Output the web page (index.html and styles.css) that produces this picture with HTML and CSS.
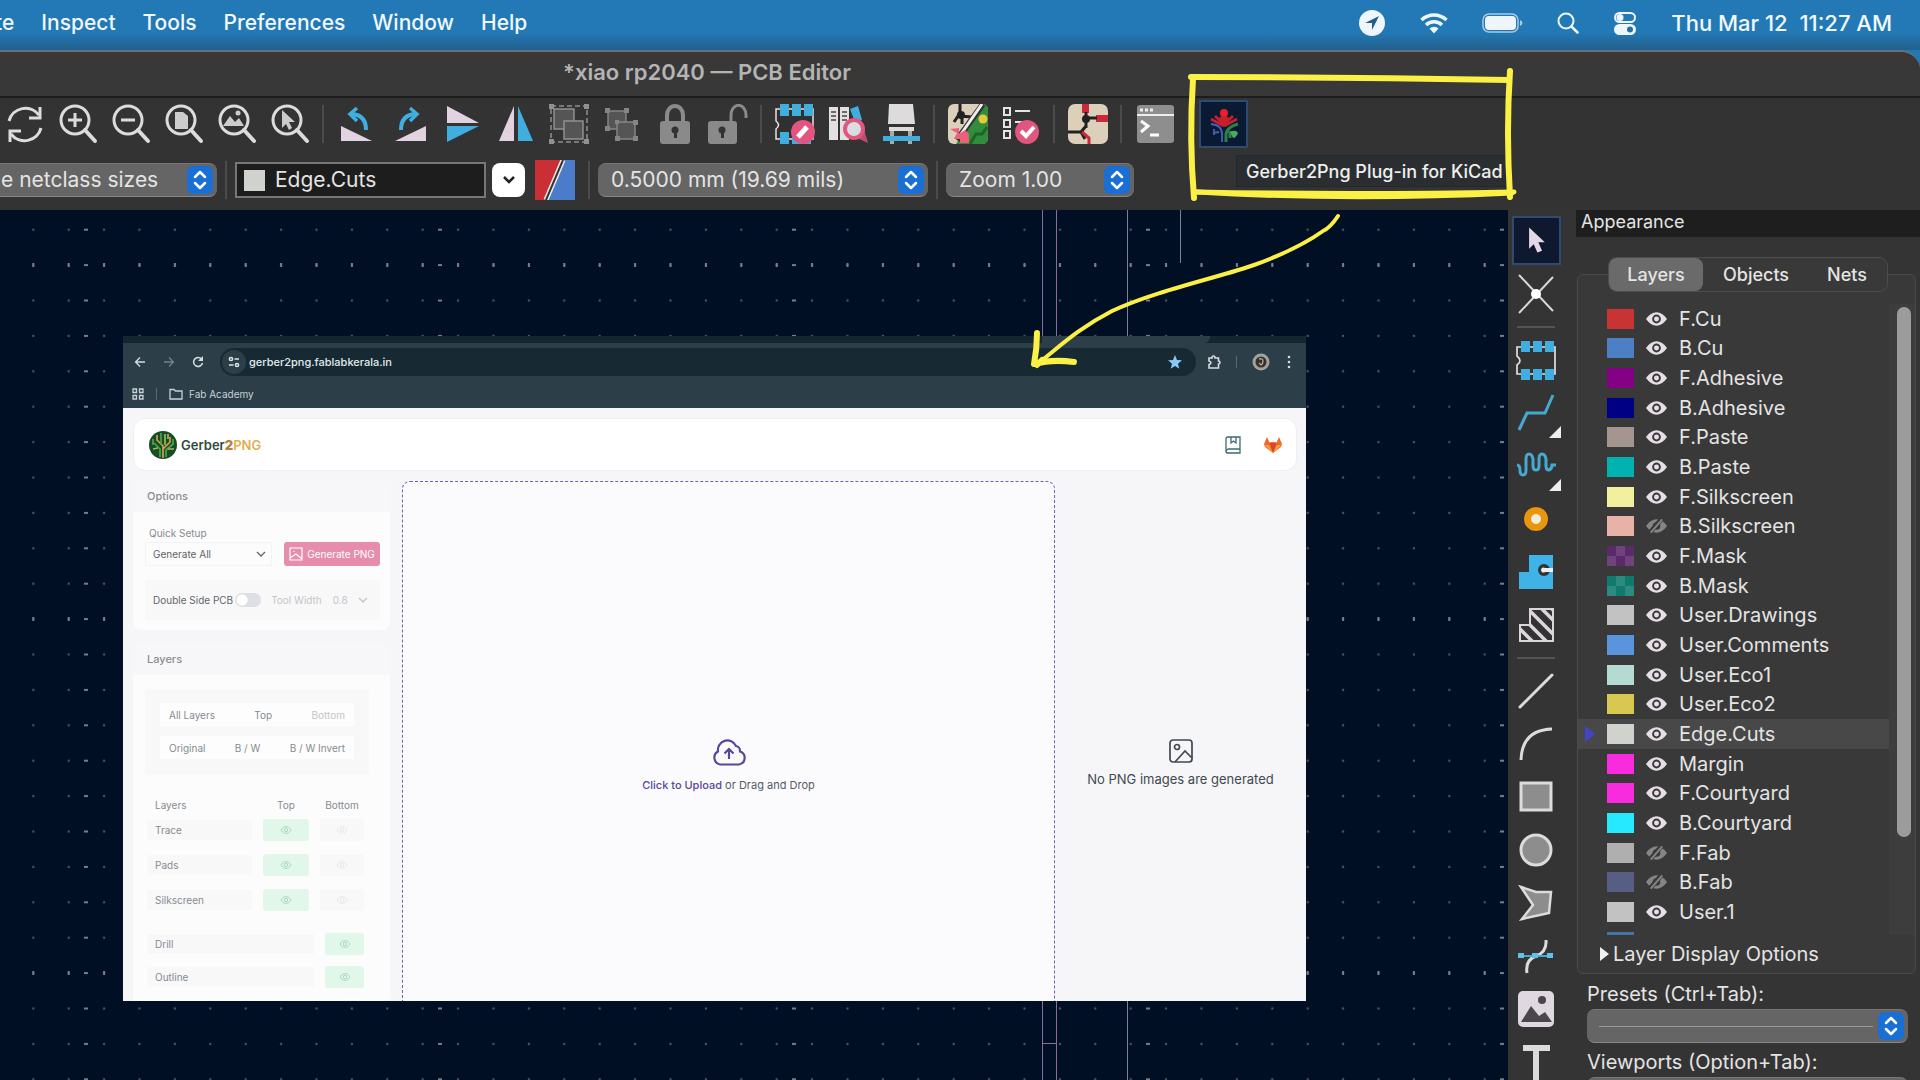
FILE: index.html
```html
<!DOCTYPE html>
<html lang="en">
<head>
<meta charset="utf-8">
<title>xiao rp2040 — PCB Editor</title>
<link rel="stylesheet" href="styles.css">
</head>
<body>
<svg class="defs" aria-hidden="true">
  <defs>
    <symbol id="eye" viewBox="0 0 22 16"><path d="M0 8Q5 1 11 1t11 7Q17 15 11 15T0 8Z" fill="#e6dfe6"/><circle cx="11" cy="8" r="4.6" fill="#3a383a"/><circle cx="11" cy="8" r="2.6" fill="#e6dfe6"/></symbol>
    <symbol id="eye-off" viewBox="0 0 22 16"><path d="M0 8Q5 1 11 1t11 7Q17 15 11 15T0 8Z" fill="#858585"/><circle cx="11" cy="8" r="4" fill="#3a3a3a"/><path d="M4 15 16 1" stroke="#3a3a3a" stroke-width="5"/><path d="M5 15 17 1" stroke="#858585" stroke-width="2"/></symbol>
    <symbol id="eye-line" viewBox="0 0 12 10"><path d="M1 5q2-3.500 5-3.500T11 5Q9 8.500 6 8.500T1 5Z" fill="none" stroke="currentColor"/><circle cx="6" cy="5" r="1.700" fill="none" stroke="currentColor"/></symbol>
    <symbol id="updown" viewBox="0 0 26 28"><rect width="26" height="28" rx="6" fill="#1a6fd4"/><path d="m8 11 5-5 5 5M8 17l5 5 5-5" fill="none" stroke="#fff" stroke-width="2.500" stroke-linecap="round" stroke-linejoin="round"/></symbol>
    <symbol id="lens" viewBox="0 0 40 40"><circle cx="17" cy="16" r="14" fill="none" stroke="#dcdcdc" stroke-width="3"/><path d="m27 26 10 11" stroke="#dcdcdc" stroke-width="4" stroke-linecap="round"/></symbol>
    <symbol id="chev" viewBox="0 0 10 6"><path d="m1 1 4 4 4-4" fill="none" stroke="currentColor" stroke-width="1.300"/></symbol>
  </defs>
</svg>

<header class="menubar">
  <nav class="menus">
    <button>te</button><button>Inspect</button><button>Tools</button><button>Preferences</button><button>Window</button><button>Help</button>
  </nav>
  <div class="status">
    <svg width="28" height="28" viewBox="0 0 28 28"><circle cx="14" cy="14" r="13" fill="#eef6fb"/><path d="M21 7 7 14h7v7Z" fill="#24618a"/></svg>
    <svg width="28" height="22" viewBox="0 0 28 22"><g fill="none" stroke="#eef6fb" stroke-width="3.500"><path d="M1.500 8a18 18 0 0 1 25 0M6 13a11.500 11.500 0 0 1 16 0"/></g><path d="m9.500 16.500 4.500 5 4.500-5a6.500 6.500 0 0 0-9 0Z" fill="#eef6fb"/></svg>
    <svg width="41" height="20" viewBox="0 0 41 20"><rect x="1" y="1" width="35" height="18" rx="6" fill="none" stroke="#a9cbe2" stroke-width="1.500"/><rect x="3" y="3" width="31" height="14" rx="4" fill="#eef6fb"/><path d="M38 7v6q2.500-1 2.500-3T38 7Z" fill="#a9cbe2"/></svg>
    <svg width="22" height="22" viewBox="0 0 22 22"><circle cx="9" cy="9" r="7.500" fill="none" stroke="#eef6fb" stroke-width="2"/><path d="m14.500 14.500 6 6" stroke="#eef6fb" stroke-width="2.500" stroke-linecap="round"/></svg>
    <svg width="24" height="24" viewBox="0 0 24 24"><rect x="2" y="2" width="20" height="9" rx="4.500" fill="none" stroke="#eef6fb" stroke-width="2"/><circle cx="7" cy="6.500" r="3.500" fill="#eef6fb"/><rect x="1" y="13" width="22" height="11" rx="5.500" fill="#eef6fb"/><circle cx="17" cy="18.500" r="3" fill="#2670a3"/></svg>
    <time>Thu Mar 12&nbsp; 11:27 AM</time>
  </div>
</header>

<div class="window">
<div class="titlebar"><h1>*xiao rp2040 — PCB Editor</h1></div>

<div class="toolbar">
  <div class="tools">
    <button aria-label="Refresh"><svg viewBox="0 0 40 40"><path d="M4 17A17 17 0 0 1 34 11M36 24A17 17 0 0 1 6 30" fill="none" stroke="#dcdcdc" stroke-width="3"/><path d="M35 3v11H24M5 38V27h11" fill="none" stroke="#dcdcdc" stroke-width="3"/></svg></button>
    <button aria-label="Zoom in"><svg viewBox="0 0 40 40"><use href="#lens"/><path d="M17 9v14M10 16h14" stroke="#dcdcdc" stroke-width="3"/></svg></button>
    <button aria-label="Zoom out"><svg viewBox="0 0 40 40"><use href="#lens"/><path d="M10 16h14" stroke="#dcdcdc" stroke-width="3"/></svg></button>
    <button aria-label="Zoom to page"><svg viewBox="0 0 40 40"><use href="#lens"/><path d="M11 8h8l5 4v13H11Z" fill="#ccc"/></svg></button>
    <button aria-label="Zoom to objects"><svg viewBox="0 0 40 40"><use href="#lens"/><path d="m6 22 7-10 5 6 4-4 5 8Z" fill="#ccc"/><circle cx="21" cy="9" r="2.500" fill="#ccc"/></svg></button>
    <button aria-label="Zoom to selection"><svg viewBox="0 0 40 40"><use href="#lens"/><path d="M12 6v18l4-4 3 6 3-2-3-6h6Z" fill="#ccc"/></svg></button>
    <i class="sep"></i>
    <button aria-label="Rotate left"><svg viewBox="0 0 40 40"><path d="M4 22v15h31Z" fill="#e2d3e0"/><path d="M15 10q14 1 14 16" fill="none" stroke="#41aee0" stroke-width="4"/><path d="m20 4-7 6 7 7" fill="none" stroke="#41aee0" stroke-width="3.500"/></svg></button>
    <button aria-label="Rotate right"><svg viewBox="0 0 40 40"><path d="M36 22v15H5Z" fill="#e2d3e0"/><path d="M25 10q-14 1-14 16" fill="none" stroke="#41aee0" stroke-width="4"/><path d="m20 4 7 6-7 7" fill="none" stroke="#41aee0" stroke-width="3.500"/></svg></button>
    <button aria-label="Mirror vertically"><svg viewBox="0 0 40 40"><path d="M4 2v17h32Z" fill="#e2d3e0"/><path d="M4 38V22h32Z" fill="#41aee0"/></svg></button>
    <button aria-label="Mirror horizontally"><svg viewBox="0 0 40 40"><path d="M3 37h15V2Z" fill="#e2d3e0"/><path d="M37 37H22V2Z" fill="#41aee0"/></svg></button>
    <button aria-label="Group"><svg viewBox="0 0 40 40"><rect x="2" y="2" width="36" height="36" fill="none" stroke="#909090" stroke-width="1.500" stroke-dasharray="5 3"/><g fill="#555" stroke="#909090" stroke-width="1.500"><path d="M5 5h20v20H5Z"/><path d="M15 17h19v18H15Z"/></g><path d="M0 0h5v5H0ZM35 0h5v5h-5ZM0 35h5v5H0ZM35 35h5v5h-5Z" fill="#909090"/></svg></button>
    <button aria-label="Ungroup"><svg viewBox="0 0 40 40"><g fill="#555" stroke="#858585" stroke-width="1.500"><path d="M6 7h18v18H6Z"/><path d="M15 18h18v17H15Z"/></g><path d="M3 4h5v5H3ZM22 4h5v5h-5ZM3 22h5v5H3ZM13 16h4v4h-4ZM31 16h5v5h-5ZM13 32h5v5h-5ZM31 32h5v5h-5Z" fill="#858585"/></svg></button>
    <button aria-label="Lock"><svg viewBox="0 0 40 40"><path d="M12 18v-7a8 9 0 0 1 16 0v7" fill="none" stroke="#8a8a8a" stroke-width="4"/><rect x="5" y="17" width="30" height="23" rx="3" fill="#8a8a8a"/><circle cx="20" cy="26" r="3.500" fill="#333"/><path d="M19 27h3v7h-3Z" fill="#333"/></svg></button>
    <button aria-label="Unlock"><svg viewBox="0 0 40 40"><path d="M23 18v-7a7 9 0 0 1 15 0v3" fill="none" stroke="#8a8a8a" stroke-width="3"/><rect x="0" y="17" width="29" height="23" rx="3" fill="#8a8a8a"/><circle cx="14" cy="26" r="3.500" fill="#333"/><path d="M13 27h3v7h-3Z" fill="#333"/></svg></button>
    <i class="sep"></i>
    <button aria-label="Footprint editor"><svg viewBox="0 0 40 40"><path d="M1 5h37v30H1V25q5-4 0-8Z" fill="#303030" stroke="#e8dfe8" stroke-width="1.500"/><path d="M5 0h9v12H5ZM17 0h9v12h-9ZM29 0h9v12h-9ZM5 28h9v12H5ZM17 32h19v8H17Z" fill="#41aee0"/><circle cx="28" cy="28" r="12" fill="#e2557f"/><path d="m23 33 9-10" stroke="#fff" stroke-width="5"/></svg></button>
    <button aria-label="Footprint library"><svg viewBox="0 0 40 40"><path d="M1 3h9v33H1ZM12 3h9v33h-9Z" fill="#e4dfe2"/><path d="M3 8h5M3 12h5M3 16h5M14 8h5M14 12h5M14 16h5" stroke="#444" stroke-width="1.500"/><path d="m22 5 8-3 4 14-7 2Z" fill="#41aee0"/><path d="m28 29 6-11 6 21-9-4Z" fill="#b84e72"/><circle cx="26" cy="25" r="9" fill="#d8dde0" stroke="#e2557f" stroke-width="4"/></svg></button>
    <button aria-label="3D viewer"><svg viewBox="0 0 40 40"><path d="m8 0h24l2 20H7ZM8 23h25v4H8Z" fill="#dedbdd"/><path d="M9 27h4v13H9ZM27 27h4v13h-4Z" fill="#aaa"/><path d="M2 32h37v5H2Z" fill="#41aee0"/></svg></button>
    <i class="sep"></i>
    <button aria-label="Update from schematic"><svg viewBox="0 0 40 40"><rect width="40" height="40" rx="6" fill="#dcd0bb"/><path d="m33 0H34q6 0 6 6v28q0 6-6 6H8Z" fill="#318c3b"/><path d="m22 40 6-10h6l5-7" fill="none" stroke="#1d6527" stroke-width="3"/><path d="M12 0v9l-6 9m6-6 12 1M14 10v10" stroke="#222" stroke-width="3" fill="none"/><circle cx="13" cy="11" r="4" fill="#222"/><path d="M35 0 9 36" stroke="#333" stroke-width="6"/><path d="M34 0 11 33" stroke="#eee" stroke-width="3"/><circle cx="35" cy="15" r="4.500" fill="#e5c83b"/><path d="m2 25 9-1v6l6-4 4 4v9h-9v-4H6l3-6Z" fill="#ed5f7b"/></svg></button>
    <button aria-label="Rules checker"><svg viewBox="0 0 40 40"><path d="M3 4h6v7H3ZM3 16h6v7H3ZM3 27h6v7H3ZM14 7h15M14 18h8" fill="none" stroke="#e4e4e4" stroke-width="2"/><circle cx="26" cy="28" r="12" fill="#e2557f"/><path d="m20 27 5 5 8-9" fill="none" stroke="#fff" stroke-width="4"/></svg></button>
    <i class="sep"></i>
    <button aria-label="Schematic editor"><svg viewBox="0 0 40 40"><rect width="40" height="40" rx="7" fill="#dcd0bb"/><path d="M14 0h7v9h-7ZM28 11h12v7H28Z" fill="#c92a3c"/><path d="M18 8v16M19 14h10M0 28h16M18 22l-5 6 4 7" fill="none" stroke="#222" stroke-width="3"/><circle cx="18" cy="15" r="4" fill="#222"/><path d="m14 28 7 6v6" fill="none" stroke="#c92a3c" stroke-width="3"/></svg></button>
    <i class="sep"></i>
    <button aria-label="Scripting console"><svg viewBox="0 0 40 40"><rect x="2" y="1" width="37" height="38" rx="3" fill="#8e8e8e"/><path d="M2 11h37" stroke="#eee" stroke-width="2"/><path d="M5 6h3M10 6h3M15 6h3" stroke="#eee" stroke-width="3"/><path d="m6 17 7 5-7 6M15 31h9" fill="none" stroke="#fff" stroke-width="3"/></svg></button>
    <button class="plugin" aria-label="Gerber2Png Plug-in"><svg viewBox="0 0 40 40"><g fill="none" stroke-width="3"><path d="M20 22 7 15m13 7 13-7M20 20V9M11 12l9 8 9-8" stroke="#c81f2c"/><path d="M7 20q11 1 11 10v8M9 29l6-1M10 25v6" stroke="#4660b4" stroke-width="1.800"/><path d="M34 20q-11 3-12 10v8M26 34v-7" stroke="#2c8144"/></g><path d="m15 14 5-4 5 4-2 7h-6Z" fill="#c81f2c"/><circle cx="20" cy="9" r="4" fill="#e8202c"/><path d="M26 28q6-3 8 1-2 5-5 5Z" fill="#4aa765"/></svg></button>
  </div>
  <div class="fields">
    <label class="combo combo-net"><select aria-label="Track width"><option>e netclass sizes</option></select><svg><use href="#updown"/></svg></label>
    <i class="sep"></i>
    <div class="layer-box"><i></i><input aria-label="Active layer" value="Edge.Cuts" readonly></div>
    <button class="drop" aria-label="Choose layer"><svg width="16" height="10" viewBox="0 0 16 10"><path d="m3 2 5 5 5-5" fill="none" stroke="#222" stroke-width="2.500"/></svg></button>
    <button class="pair" aria-label="Layer pair"><svg width="40" height="40" viewBox="0 0 40 40"><path d="M0 0h40v40H0Z" fill="#4a7cc9"/><path d="M0 0h27L10 40H0Z" fill="#c92f35"/><path d="M28 0 11 40" stroke="#eee" stroke-width="5"/><path d="M28 0 11 40" stroke="#333" stroke-width="2"/></svg></button>
    <i class="sep"></i>
    <label class="combo combo-grid"><select aria-label="Grid"><option>0.5000 mm (19.69 mils)</option></select><svg><use href="#updown"/></svg></label>
    <i class="sep"></i>
    <label class="combo combo-zoom"><select aria-label="Zoom"><option>Zoom 1.00</option></select><svg><use href="#updown"/></svg></label>
  </div>
</div>

<main class="workspace">
  <section class="canvas">
    <svg class="grid-dots" aria-hidden="true">
      <defs>
        <pattern id="dots" x="15.600" y="2" width="35.400" height="35.400" patternUnits="userSpaceOnUse"><circle cx="17.700" cy="17.700" r="1.200" fill="#4a5561"/></pattern>
        <pattern id="cols" x="-91" y="2" width="354" height="35.400" patternUnits="userSpaceOnUse"><rect x="175" y="16.700" width="4" height="2" fill="#76808b"/></pattern>
        <pattern id="rows" x="15.600" y="-122" width="35.400" height="354" patternUnits="userSpaceOnUse"><rect x="16.700" y="175" width="2" height="4" fill="#76808b"/></pattern>
      </defs>
      <rect width="100%" height="100%" fill="url(#dots)"/><rect width="100%" height="100%" fill="url(#cols)"/><rect width="100%" height="100%" fill="url(#rows)"/>
      <g fill="none" stroke="#8a6c9e"><path d="M1042.500 0v900M1056.500 0v900M1042.500 833.500h14"/><path d="M1127.500 0v900M1180.500 0v53" stroke="#7f7f9a"/></g>
    </svg>

    <article class="browser">
      <div class="tabstrip"><i></i></div>
      <div class="navbar">
        <button aria-label="Back"><svg width="12" height="12" viewBox="0 0 12 12"><path d="M11 6H2m4-4.500L1.500 6 6 10.500" fill="none" stroke="#d5dde1" stroke-width="1.300"/></svg></button>
        <button aria-label="Forward"><svg width="12" height="12" viewBox="0 0 12 12"><path d="M1 6h9M6 1.500 10.500 6 6 10.500" fill="none" stroke="#72828b" stroke-width="1.300"/></svg></button>
        <button aria-label="Reload"><svg width="12" height="12" viewBox="0 0 12 12"><path d="M10.500 7A4.500 4.500 0 1 1 9.500 3" fill="none" stroke="#d5dde1" stroke-width="1.500"/><path d="M11 0v5H6Z" fill="#d5dde1"/></svg></button>
        <div class="omnibox">
          <span class="site"><svg width="12" height="12" viewBox="0 0 12 12"><g fill="none" stroke="#dfe6e9" stroke-width="1.500"><circle cx="3" cy="3" r="1.600"/><path d="M6.500 3H11M1 9h4.500"/><circle cx="9" cy="9" r="1.600"/></g></svg></span>
          <input aria-label="Address" value="gerber2png.fablabkerala.in">
          <svg width="14" height="14" viewBox="0 0 14 14"><path d="m7 0 2 5 5 .3-4 3.400 1.300 5L7 11l-4.300 2.700 1.300-5L0 5.300 5 5Z" fill="#8cc8f5"/></svg>
        </div>
        <svg width="14" height="14" viewBox="0 0 14 14"><path d="M2 3h3q0-2 1.500-2T8 3h3.500v3Q13 6 13 7.500T11.500 9v4H2V9.500Q4 9 4 7.700T2 6Z" fill="none" stroke="#d5dde1" stroke-width="1.600"/></svg>
        <i class="nav-sep"></i>
        <svg width="18" height="18" viewBox="0 0 18 18"><circle cx="9" cy="9" r="8.500" fill="#a3a29d"/><circle cx="9" cy="9" r="5.500" fill="#35312d"/><path d="M7 6q4-1 4 2t-2 4l-2-2" fill="none" stroke="#b5aa98" stroke-width="1.300"/></svg>
        <svg width="4" height="14" viewBox="0 0 4 14"><g fill="#d5dde1"><circle cx="2" cy="2" r="1.300"/><circle cx="2" cy="7" r="1.300"/><circle cx="2" cy="12" r="1.300"/></g></svg>
      </div>
      <div class="bookmarks">
        <svg width="12" height="12" viewBox="0 0 12 12"><path d="M1 1h3.500v3.500H1ZM7.500 1H11v3.500H7.500ZM1 7.500h3.500V11H1ZM7.500 7.500H11V11H7.500Z" fill="none" stroke="#c8d2d7" stroke-width="1.300"/></svg>
        <i class="nav-sep"></i>
        <svg width="14" height="12" viewBox="0 0 14 12"><path d="M1 10V1.500h4L6.500 3H13v8H1Z" fill="none" stroke="#c8d2d7" stroke-width="1.300"/></svg>
        <a href="#">Fab Academy</a>
      </div>

      <div class="page">
        <header class="site-head">
          <svg width="28" height="28" viewBox="0 0 28 28"><circle cx="14" cy="14" r="14" fill="#174c28"/><g fill="none" stroke-width="1.700"><path d="M14 27V15L8 9V4M14 18l7-7V6" stroke="#d3a04e"/><path d="M11 26v-8l-6-6M17 26v-7l7-6M12 14V2M4 8v6M24 8v6" stroke="#4fa348"/><path d="M16 14V3M9 17l-5 1M19 18h6M19 8V3" stroke="#a8b25a"/></g></svg>
          <strong>Gerber<b>2</b><em>PNG</em></strong>
          <span class="head-links">
            <a href="#" aria-label="Documentation"><svg width="16" height="18" viewBox="0 0 16 18"><path d="M1 15.500V3q0-2 2-2h12v16H3q-2 0-2-1.500T3 13h12M6 1v6l2.500-2L11 7V1" fill="none" stroke="#3e6b70" stroke-width="1.300"/></svg></a>
            <a href="#" aria-label="GitLab"><svg width="18" height="16" viewBox="0 0 18 16"><path d="M3 0 0 7l1 3 8 6 8-6 1-3-3-7-2.500 5.500h-7Z" fill="#ec6a2c"/><path d="M5.500 5.500h7L9 16Z" fill="#d9442a"/><path d="m0 8 9 8-4-8Zm18 0-9 8 4-8Z" fill="#f59a38"/></svg></a>
          </span>
        </header>
        <div class="page-body">
          <aside class="side">
            <section class="card">
              <h2>Options</h2>
              <div class="setup">
                <label for="quick">Quick Setup</label>
                <div class="setup-row">
                  <span class="mini-select"><select id="quick"><option>Generate All</option></select><svg width="10" height="6"><use href="#chev"/></svg></span>
                  <button class="generate"><svg width="14" height="14" viewBox="0 0 14 14"><path d="M1 1h12v12H1Zm0 10 6-4 6 5M5 4v1" fill="none" stroke="#fff" stroke-width="1.200"/></svg>Generate PNG</button>
                </div>
                <div class="double">
                  <label for="double">Double Side PCB</label><input id="double" type="checkbox" class="switch">
                  <label for="width" class="dim">Tool Width</label>
                  <select id="width" class="dim"><option>0.8</option></select><svg class="dim" width="10" height="6"><use href="#chev"/></svg>
                </div>
              </div>
            </section>
            <section class="card layers-card">
              <h2>Layers</h2>
              <div class="views">
                <div><button>All Layers</button><button>Top</button><button disabled>Bottom</button></div>
                <div><button>Original</button><button>B / W</button><button>B / W Invert</button></div>
              </div>
              <table class="stack">
                <colgroup><col class="c-name"><col class="c-top"><col class="c-gap"><col class="c-bottom"></colgroup>
                <thead><tr><th class="name">Layers</th><th>Top</th><th colspan="2">Bottom</th></tr></thead>
                <tbody>
                  <tr><td><span>Trace</span></td><td><button class="on" aria-label="Top trace"><svg><use href="#eye-line"/></svg></button></td><td colspan="2"><button aria-label="Bottom trace"><svg><use href="#eye-line"/></svg></button></td></tr>
                  <tr><td><span>Pads</span></td><td><button class="on" aria-label="Top pads"><svg><use href="#eye-line"/></svg></button></td><td colspan="2"><button aria-label="Bottom pads"><svg><use href="#eye-line"/></svg></button></td></tr>
                  <tr><td><span>Silkscreen</span></td><td><button class="on" aria-label="Top silkscreen"><svg><use href="#eye-line"/></svg></button></td><td colspan="2"><button aria-label="Bottom silkscreen"><svg><use href="#eye-line"/></svg></button></td></tr>
                </tbody>
                <tbody class="both">
                  <tr><td colspan="3"><span>Drill</span></td><td><button class="on" aria-label="Drill"><svg><use href="#eye-line"/></svg></button></td></tr>
                  <tr><td colspan="3"><span>Outline</span></td><td><button class="on" aria-label="Outline"><svg><use href="#eye-line"/></svg></button></td></tr>
                </tbody>
              </table>
            </section>
          </aside>
          <section class="dropzone">
            <svg width="34" height="28" viewBox="0 0 34 28"><path d="M8 26.500a7 7 0 0 1-2-13 9.500 9.500 0 0 1 18-5.500 5 5 0 0 1 4 5.500 6.700 6.700 0 0 1-1 13Z" fill="none" stroke="#57479c" stroke-width="2.200"/><path d="M17 21V11m-4.500 4.500L17 11l4.500 4.500" fill="none" stroke="#57479c" stroke-width="2.200"/></svg>
            <p><a href="#">Click to Upload</a> or Drag and Drop</p>
          </section>
          <section class="results">
            <svg width="24" height="24" viewBox="0 0 24 24"><rect x="1" y="1" width="22" height="22" rx="3" fill="none" stroke="#3f4a4f" stroke-width="1.700"/><circle cx="8" cy="8" r="2.500" fill="none" stroke="#3f4a4f" stroke-width="1.700"/><path d="m6 23 10-11 7 7" fill="none" stroke="#3f4a4f" stroke-width="1.700"/></svg>
            <p>No PNG images are generated</p>
          </section>
        </div>
      </div>
    </article>
  </section>

  <aside class="palette">
    <button class="active" aria-label="Select"><svg viewBox="0 0 40 40"><path d="M12 6v23l5-5 4 9 5-2-4-9h7Z" fill="#e4d8e6"/></svg></button>
    <button aria-label="Local ratsnest"><svg viewBox="0 0 40 40"><path d="m3 1 34 36M37 3 3 39" stroke="#d8d8d8" stroke-width="2"/><circle cx="20" cy="20" r="5" fill="#fff"/></svg></button>
    <i class="hsep"></i>
    <button aria-label="Add footprint"><svg viewBox="0 0 40 40"><path d="M1 7h38v27H1v-9q6-4 0-9Z" fill="none" stroke="#e2dde2" stroke-width="1.700"/><path d="M5 1h9v11H5ZM17 1h9v11h-9ZM29 1h9v11h-9ZM5 29h9v11H5ZM17 29h9v11h-9ZM29 29h9v11h-9Z" fill="#41aee0"/></svg></button>
    <button class="more" aria-label="Route tracks"><svg viewBox="0 0 40 40"><path d="M3 37 11 20h18l8-18" fill="none" stroke="#45a9d0" stroke-width="3"/></svg></button>
    <button class="more" aria-label="Tune length"><svg viewBox="0 0 40 40"><path d="M1 19q3 0 3 5 0 5 3 5t3-5V13q0-5 3-5t4 5v7q0 4 3 4t3-4v-7q0-5 3-5t4 5v7q0 4 3 4 3-1 3-5h4" fill="none" stroke="#45a9d0" stroke-width="3"/></svg></button>
    <button aria-label="Add via"><svg viewBox="0 0 40 40"><circle cx="20" cy="20" r="8.500" fill="#f4eddc" stroke="#e8950f" stroke-width="7"/></svg></button>
    <button aria-label="Add zone"><svg viewBox="0 0 40 40"><path d="M13 3h24v34H3V20h10Z" fill="#3fb2e8"/><circle cx="28" cy="18" r="6" fill="#333"/><path d="M37 16h-8a2.500 2.500 0 1 0 0 4h8Z" fill="#eee"/></svg></button>
    <button aria-label="Add rule area"><svg viewBox="0 0 40 40"><clipPath id="area"><path d="M14 4h23v32H4V20h10Z"/></clipPath><g clip-path="url(#area)"><path d="M0 0h40v40H0Z" fill="#333"/><path d="m-8 12 34 34M-2 4l40 40M4-4l40 40M12-10l34 34M20-12l24 24M-12 22l24 24" stroke="#dcd6dc" stroke-width="3.500"/></g><path d="M14 4h23v32H4V20h10Z" fill="none" stroke="#dcd6dc" stroke-width="2"/></svg></button>
    <i class="hsep"></i>
    <button aria-label="Line"><svg viewBox="0 0 40 40"><path d="M4 36 36 4" stroke="#dcdcdc" stroke-width="3" stroke-linecap="round"/></svg></button>
    <button aria-label="Arc"><svg viewBox="0 0 40 40"><path d="M5 36Q6 6 36 5" fill="none" stroke="#dcdcdc" stroke-width="3"/></svg></button>
    <button aria-label="Rectangle"><svg viewBox="0 0 40 40"><path d="M5 6h30v27H5Z" fill="#8d8d8d" stroke="#dcdcdc" stroke-width="3"/></svg></button>
    <button aria-label="Circle"><svg viewBox="0 0 40 40"><circle cx="20" cy="20" r="15" fill="#8d8d8d" stroke="#dcdcdc" stroke-width="3"/></svg></button>
    <button aria-label="Polygon"><svg viewBox="0 0 40 40"><path d="m5 4 15 5 15 0-2 21-27 6 11-14Z" fill="#8d8d8d" stroke="#dcdcdc" stroke-width="2.500"/></svg></button>
    <button aria-label="Bezier"><svg viewBox="0 0 40 40"><path d="M11 37Q9 24 20 20T30 4" fill="none" stroke="#dcdcdc" stroke-width="3"/><path d="M4 20h32" stroke="#45a9d0" stroke-width="2"/><path d="M2 17h6v5H2ZM16 17h6v5h-6ZM31 17h6v5h-6Z" fill="#5fc0ea"/></svg></button>
    <button aria-label="Image"><svg viewBox="0 0 40 40"><rect x="2" y="2" width="36" height="36" rx="5" fill="#e0d8e0"/><path d="m5 33 10-16 8 10 6-4 7 10Z" fill="#4a474a"/><circle cx="26" cy="11" r="4" fill="#4a474a"/></svg></button>
    <button aria-label="Text"><svg viewBox="0 0 40 40"><path d="M7 6h27M20 6v32" stroke="#dcdcdc" stroke-width="6"/></svg></button>
  </aside>

  <aside class="appearance">
    <h2>Appearance</h2>
    <div class="tabs"><button class="current">Layers</button><button>Objects</button><button>Nets</button></div>
    <div class="group">
      <div class="scroll">
        <ul id="layers"></ul>
        <div class="track"><i></i></div>
      </div>
      <button class="disclosure"><svg width="9" height="16" viewBox="0 0 9 16"><path d="m0 1 9 7-9 7Z" fill="#f0f0f0"/></svg>Layer Display Options</button>
    </div>
    <div class="presets">
      <label for="presets">Presets (Ctrl+Tab):</label>
      <span class="combo combo-line"><select id="presets"><option></option></select><svg><use href="#updown"/></svg></span>
      <label for="viewports">Viewports (Option+Tab):</label>
      <span class="combo combo-line"><select id="viewports"><option></option></select><svg><use href="#updown"/></svg></span>
    </div>
  </aside>
</main>
</div>

<div class="tooltip" role="tooltip">Gerber2Png Plug-in for KiCad</div>
<svg class="ink" aria-hidden="true">
  <g fill="none" stroke="#fbf045" stroke-linecap="round" stroke-linejoin="round">
    <path d="M1191 77q160 0 318 3" stroke-width="6"/>
    <path d="M1193 79q-4 60 1 119" stroke-width="6"/>
    <path d="M1510 71q-4 60 0 126" stroke-width="6"/>
    <path d="M1197 192q150 3 317 0" stroke-width="5"/>
    <path d="M1197 192q150 9 315 1" stroke-width="5"/>
    <path d="M1338 216q-8 12-15 15-25 18-69 34c-30 11-100 26-142 46-35 18-55 38-76 54" stroke-width="4"/>
    <path d="M1037 333q0 16-3 31 18-5 40-2M1037 365l5-5" stroke-width="6"/>
  </g>
</svg>
<script src="layers.js"></script>
</body>
</html>
```
FILE: layers.js
```js
const layers = [
  ["F.Cu", "#c83434"], ["B.Cu", "#4d7fc4"], ["F.Adhesive", "#840084"], ["B.Adhesive", "#000084"],
  ["F.Paste", "#a39690"], ["B.Paste", "#00b3b1"], ["F.Silkscreen", "#f0f09f"], ["B.Silkscreen", "#e8b2a7", true],
  ["F.Mask", "#5b2a6a"], ["B.Mask", "#0f7a6e"], ["User.Drawings", "#c2c2c2"], ["User.Comments", "#5994dc"],
  ["User.Eco1", "#b4dbd2"], ["User.Eco2", "#d8c852"], ["Edge.Cuts", "#d0d2cd"], ["Margin", "#f92bdf"],
  ["F.Courtyard", "#f92bdf"], ["B.Courtyard", "#26e9ff"], ["F.Fab", "#afafaf", true], ["B.Fab", "#585d84", true],
  ["User.1", "#c2c2c2"],
];
document.getElementById("layers").innerHTML = layers.map(([name, color, hidden]) => `
  <li class="${name === "Edge.Cuts" ? "selected" : ""}${name.endsWith("Mask") ? " translucent" : ""}">
    <i class="mark"></i><i class="swatch" style="background-color:${color}"></i>
    <button aria-label="Toggle ${name}"><svg><use href="#${hidden ? "eye-off" : "eye"}"/></svg></button>
    <span>${name}</span>
  </li>`).join("");
```
FILE: styles.css
```css
* { box-sizing: border-box; }
html, body { height: 100%; }
body { margin: 0; overflow: hidden; display: flex; flex-direction: column; position: relative; background: #2278b3; color: #e4e4e4; font: 20px/24px Inter, "Liberation Sans", sans-serif; }
button, select, input { font: inherit; color: inherit; border: 0; background: none; padding: 0; margin: 0; }
select { appearance: none; }
h1, h2, p, ul { margin: 0; padding: 0; font: inherit; }
a { color: inherit; text-decoration: none; }
svg { display: block; flex: none; }
.defs { position: absolute; width: 0; height: 0; }

.menubar { height: 50px; flex: none; display: flex; justify-content: space-between; padding: 0 28px 4px 0; background: linear-gradient(#2279b5 65%, #235f8c); color: #f2f8fc; font-size: 21px; font-weight: 500; }
.menus { display: flex; gap: 27px; margin-left: -5px; }
.status { display: flex; align-items: center; gap: 34px; font-size: 22px; }

.window { flex: 1; min-height: 0; display: flex; flex-direction: column; background: #343434; border-top: 2px solid #5c7484; border-radius: 0 20px 0 0; overflow: hidden; }
.titlebar { height: 46px; flex: none; border-bottom: 2px solid #1d1d1d; background: linear-gradient(#403632, #383838 14px); }
.titlebar h1 { width: 1414px; max-width: 100%; text-align: center; font-size: 22px; line-height: 40px; font-weight: 600; color: #b4b4b4; }
.toolbar { flex: none; height: 112px; background: #333; }
.tools { display: flex; align-items: center; height: 52px; margin-left: -2px; }
.tools button { width: 53px; height: 48px; display: grid; place-items: center; }
.tools svg { width: 40px; height: 40px; }
.tools .plugin { width: 49px; margin-left: 18px; background: #0b1a33; border: 2px solid #2f4c70; }
.sep { width: 2px; height: 38px; margin: 0 6px; background: #4c4c4c; flex: none; }
.fields { display: flex; align-items: center; height: 60px; font-size: 21px; }
.fields .sep { margin: 0 8px; }
.combo { display: grid; align-items: center; height: 34px; border-radius: 8px; background: #656565; border-bottom: 1px solid #888; border-top: 1px solid #777; }
.combo > * { grid-area: 1 / 1; }
.combo select { width: 100%; height: 32px; padding-left: 13px; }
.combo svg { width: 26px; height: 28px; justify-self: end; margin-right: 4px; pointer-events: none; }
.combo-net { width: 217px; border-radius: 0 8px 8px 0; }
.combo-net select { padding-left: 1px; }
.combo-grid { width: 330px; }
.combo-zoom { width: 188px; }
.layer-box { width: 251px; height: 36px; display: flex; align-items: center; gap: 10px; padding-left: 7px; background: #1d1d1d; border: 2px solid #777; }
.layer-box i { width: 21px; height: 21px; background: #d0d2cd; }
.layer-box input { width: 190px; }
.drop { width: 33px; height: 34px; margin: 0 10px 0 6px; border-radius: 8px; background: #fff; display: grid; place-items: center; }
.pair { margin-right: 5px; }

.workspace { flex: 1; min-height: 0; display: grid; grid-template-columns: minmax(0, 1fr) 68px 344px; grid-template-rows: minmax(0, 1fr); }
.canvas { position: relative; background: #000f23; padding: 126px 202px 79px 123px; display: flex; }
.grid-dots { position: absolute; inset: 0; width: 100%; height: 100%; }

.browser { position: relative; flex: 1; min-width: 0; display: flex; flex-direction: column; overflow: hidden; background: #2c3e48; font-size: 10px; line-height: 14px; }
.tabstrip { height: 7px; flex: none; background: #14262f; display: flex; justify-content: flex-end; }
.tabstrip i { width: 168px; margin-right: 96px; background: #2c3e48; border-radius: 0 0 6px 0; }
.navbar { height: 38px; flex: none; display: flex; align-items: center; gap: 17px; padding: 0 15px 0 11px; }
.omnibox { flex: 1; height: 28px; margin: 0 -6px 0 -1px; display: flex; align-items: center; padding: 0 14px 0 2px; border-radius: 14px; background: #172a34; }
.site { width: 24px; height: 24px; border-radius: 12px; background: #2c3e48; display: grid; place-items: center; }
.omnibox input { flex: 1; margin-left: 3px; font-size: 11px; font-weight: 500; color: #e2eaed; }
.nav-sep { width: 1px; height: 12px; background: #586a74; margin: 0 -2px; }
.bookmarks { height: 27px; flex: none; display: flex; align-items: center; gap: 14px; padding: 0 0 2px 9px; color: #c8d2d7; }
.bookmarks a { margin-left: -8px; }

.page { flex: 1; min-height: 0; padding: 10px 9px 0 10px; background: #f6f6f8; overflow: hidden; color: #868b90; }
.site-head { height: 53px; padding: 0 14px 0 15px; display: flex; align-items: center; gap: 4px; background: #fff; border: 1px solid #eeeef0; border-radius: 12px; }
.site-head strong { font-size: 13px; font-weight: 600; color: #2e4c40; }
.site-head b { color: #b7823f; }
.site-head em { font-style: normal; color: #dfb052; }
.head-links { margin-left: auto; display: flex; align-items: center; gap: 23px; }
.page-body { display: grid; grid-template-columns: 257px minmax(0, 1fr) 242px; margin-top: 10px; align-items: start; }
.side { width: 257px; display: grid; gap: 14px; }
.card { background: #fcfcfd; border-radius: 8px; padding-bottom: 10px; }
.card h2 { height: 31px; padding: 0 14px; font-size: 11px; line-height: 31px; font-weight: 500; color: #8a8c90; background: #f7f7f9; }
.setup { padding: 14px 10px 0 12px; }
.setup > label { padding-left: 4px; }
.setup-row { display: flex; gap: 12px; margin-top: 2px; }
.mini-select { width: 127px; display: grid; align-items: center; background: #fcfcfc; border: 1px solid #f3f3f4; color: #606468; }
.mini-select > * { grid-area: 1 / 1; }
.mini-select select { width: 100%; height: 20px; padding-left: 7px; }
.mini-select svg { justify-self: end; margin-right: 5px; }
.generate { width: 96px; height: 24px; display: flex; align-items: center; justify-content: center; gap: 4px; border-radius: 3px; background: #e58dab; color: #fff; }
.double { display: flex; align-items: center; height: 40px; margin-top: 14px; padding-left: 8px; background: #f8f8f9; color: #63676b; }
.switch { appearance: none; width: 26px; height: 14px; margin: 0 10px 0 2px; border-radius: 7px; background: radial-gradient(circle at 7px 7px, #fff 5px, #dedee6 6px); }
.double .dim { color: #c3c5c9; }
.double select { margin: 0 7px 0 11px; width: 18px; }
.layers-card { padding-bottom: 40px; }
.views { margin: 14px 21px 0 12px; padding: 14px 15px 16px; display: grid; gap: 10px; background: #f8f8f9; border-radius: 4px; }
.views div { display: flex; justify-content: space-between; height: 23px; padding: 0 9px; background: #fdfdfd; }
.views button:disabled { color: #c3c5c9; }
.stack { margin: 22px 0 0 14px; width: 217px; table-layout: fixed; border-collapse: collapse; }
.c-name { width: 116px; } .c-top { width: 57px; } .c-gap { width: 5px; } .c-bottom { width: 39px; }
.stack th { font-weight: 400; padding: 0 11px 0 0; height: 15px; }
.stack th:last-child { padding: 0; }
.stack .name { text-align: left; padding-left: 8px; }
.stack td { height: 35px; padding: 0 11px 0 0; }
.stack td:last-child { padding: 0; }
.stack span { display: block; height: 20px; line-height: 20px; padding-left: 8px; background: #f8f8f9; }
.stack button { width: 100%; height: 22px; display: grid; place-items: center; background: #f8f8f9; border-radius: 3px; color: #e8e8ea; }
.stack .on { background: #e0f7ea; color: #a9d9be; }
.stack button svg { width: 12px; height: 10px; }
.both::before { content: ""; display: block; height: 10px; }
.both td { height: 33px; }
.dropzone { margin-left: 12px; min-height: 568px; display: flex; flex-direction: column; align-items: center; justify-content: center; gap: 12px; border: 1px dashed #6f63a8; border-radius: 8px; background: #fbfbfd; font-size: 11px; color: #565c66; }
.dropzone a { color: #57479c; font-weight: 500; }
.results { min-height: 564px; display: flex; flex-direction: column; align-items: center; justify-content: center; gap: 8px; padding-left: 9px; font-size: 13px; line-height: 16px; color: #3f4a4f; }

.palette { padding-top: 4px; display: flex; flex-direction: column; overflow: hidden; }
.palette button { width: 56px; height: 53px; flex: none; display: grid; place-items: center; position: relative; }
.palette svg { width: 40px; height: 40px; }
.palette .active svg { width: 49px; height: 49px; padding: 4px; background: #0e1930; border: 2px solid #2f4c70; }
.palette .more::after { content: ""; position: absolute; right: 3px; bottom: 1px; border: 6px solid; border-color: transparent #eee #eee transparent; }
.hsep { width: 38px; height: 2px; flex: none; margin: 6px 9px 5px; background: #545454; }

.appearance { display: flex; flex-direction: column; min-width: 0; }
.appearance h2 { flex: none; height: 27px; padding-left: 5px; font-size: 18px; background: #1e1e1e; }
.tabs { position: relative; flex: none; align-self: center; width: 280px; height: 35px; margin-top: 20px; display: grid; grid-template-columns: 94px 106px 76px; border: 1px solid #4d4d4d; border-radius: 9px; background: #393939; font-size: 18px; font-weight: 500; }
.tabs .current { background: #6a6a6a; border-radius: 8px; }
.group { flex: none; margin: -18px 4px 0 1px; padding-top: 29px; border: 1px solid #4a4a4a; border-radius: 6px; background: #393939; }
.scroll { display: flex; height: 631px; overflow: hidden; }
.scroll ul { flex: 1; height: 623px; list-style: none; display: grid; grid-template-rows: repeat(21, 1fr); grid-auto-rows: 0; }
.scroll ul::after { content: ""; width: 27px; height: 20px; margin: 5px 0 0 29px; background: #4673a8; }
.scroll li { display: grid; grid-template-columns: 10px 27px 21px 1fr; column-gap: 12px; align-items: center; padding-left: 7px; }
.scroll li > .mark { height: 16px; }
.selected { background: #484848; }
.selected .mark { border-left: 10px solid #4343cc; border-top: 8px solid transparent; border-bottom: 8px solid transparent; }
.swatch { height: 20px; }
.translucent .swatch { background-image: conic-gradient(rgba(255,255,255,.12) 25%, transparent 0 50%, rgba(255,255,255,.12) 0 75%, transparent 0); background-size: 18px 20px; }
.scroll button svg { width: 21px; height: 16px; }
.track { width: 26px; padding: 3px 0 0 8px; background: #3d3d3d; }
.track i { display: block; width: 14px; height: 530px; border-radius: 7px; background: #9c9c9c; }
.disclosure { display: flex; align-items: center; gap: 4px; height: 38px; padding-left: 22px; }
.presets { display: grid; padding: 8px 12px 0 11px; }
.presets label { line-height: 24px; margin-bottom: 3px; }
.combo-line { margin-bottom: 7px; background: linear-gradient(#999, #999) 12px 50% / 274px 1px no-repeat #656565; }

.tooltip { position: absolute; left: 1236px; top: 155px; height: 32px; width: 273px; padding-left: 9px; line-height: 32px; font-size: 18px; font-weight: 500; white-space: nowrap; color: #eee; background: #2b2e30; border: 1px solid #25282b; }
.ink { position: absolute; left: 0; top: 0; width: 100%; height: 100%; pointer-events: none; }
```
